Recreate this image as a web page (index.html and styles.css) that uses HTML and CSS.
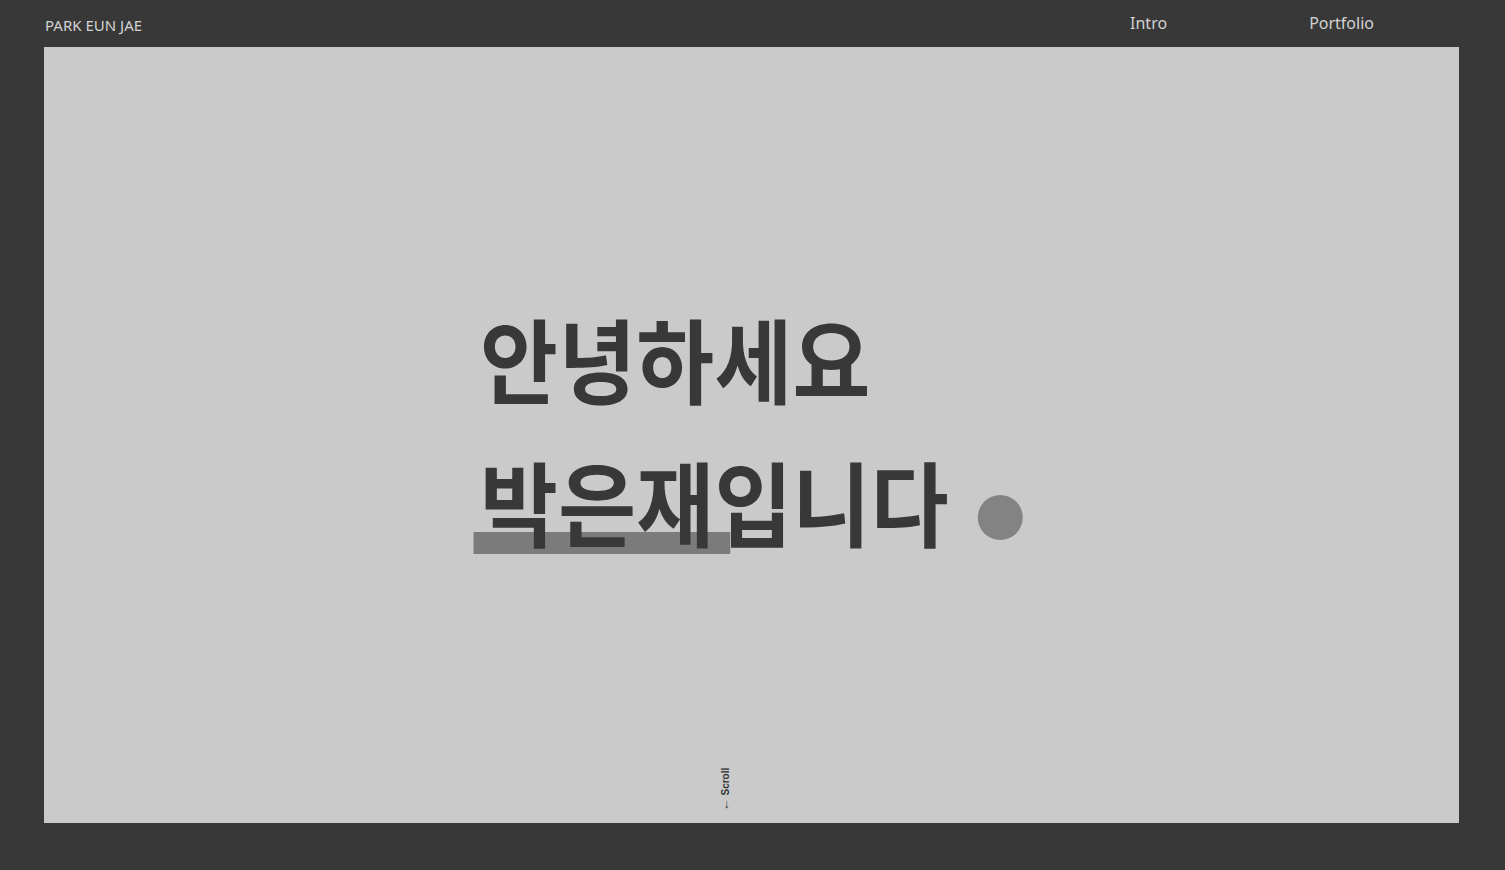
FILE: index.html
```html
<!DOCTYPE html>
<html lang="ko">
<head>
<meta charset="utf-8">
<title>PARK EUN JAE</title>
<link rel="stylesheet" href="styles.css">
</head>
<body>
<header class="top">
  <a class="logo" href="#">PARK EUN JAE</a>
  <nav class="menu">
    <a class="menu-item intro" href="#">Intro</a>
    <a class="menu-item portfolio" href="#">Portfolio</a>
  </nav>
</header>
<main class="panel">
  <h1 class="greeting">
    <span class="line">안녕하세요</span>
    <span class="line second"><span class="name">박은재<span class="bar"></span></span>입니다<span class="dot"></span></span>
  </h1>
  <div class="scroll"><span class="arrow">←</span> Scroll</div>
</main>
</body>
</html>
```
FILE: styles.css
```css
* { box-sizing: border-box; }
html, body { margin: 0; padding: 0; }
body {
  background: #383838;
  font-family: "Noto Sans", "Noto Sans CJK KR", sans-serif;
  width: 1505px;
  height: 870px;
  overflow: hidden;
}
a { text-decoration: none; color: inherit; }
.top {
  height: 47px;
  display: flex;
  align-items: center;
  padding-left: 45px;
  color: #d2d2d2;
}
.logo {
  font-size: 15px;
  padding-top: 2px;
}
.menu {
  margin-left: auto;
  display: flex;
  padding-right: 131px;
}
.menu-item {
  font-size: 16px;
  margin-top: -2px;
}
.intro { margin-right: 142px; }
.panel {
  position: relative;
  margin: 0 46px 0 44px;
  height: 776px;
  background: #cacaca;
  display: flex;
  align-items: center;
  padding-left: 436px;
}
.greeting {
  margin: 0 0 14px 0;
  font-family: "Noto Sans CJK KR", sans-serif;
  font-weight: 700;
  font-size: 92px;
  letter-spacing: 0.3px;
  color: #383838;
  line-height: 143px;
  transform: scaleX(0.92);
  transform-origin: left center;
}
.line { display: block; white-space: nowrap; }
.second { display: flex; align-items: center; }
.name { position: relative; z-index: 1; }
.bar {
  position: absolute;
  left: -7px;
  width: 279px;
  top: 104px;
  height: 22px;
  background: #7b7b7b;
  z-index: -1;
}
.dot {
  display: inline-block;
  width: 49px;
  height: 45px;
  border-radius: 50%;
  background: #838383;
  margin-left: 31px;
  margin-top: 35px;
}
.scroll {
  position: absolute;
  left: 659px;
  bottom: 26px;
  transform: rotate(-90deg);
  font-family: "Liberation Sans", sans-serif;
  font-weight: 700;
  font-size: 10px;
  color: #383838;
  white-space: nowrap;
}
.arrow { font-weight: 400; font-size: 13px; }
```
